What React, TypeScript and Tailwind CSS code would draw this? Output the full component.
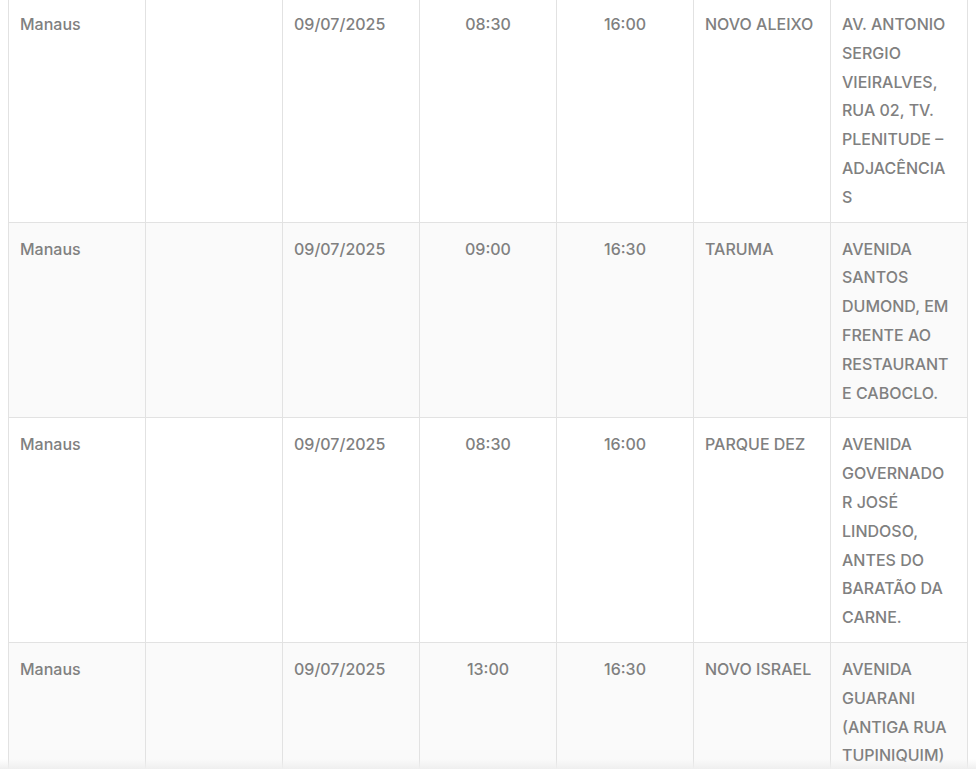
import React from 'react';

type Row = {
  city: string;
  date: string;
  start: string;
  end: string;
  district: string;
  address: string[];
};

const rows: Row[] = [
  {
    city: 'Manaus',
    date: '09/07/2025',
    start: '08:30',
    end: '16:00',
    district: 'NOVO ALEIXO',
    address: ['AV. ANTONIO', 'SERGIO', 'VIEIRALVES,', 'RUA 02, TV.', 'PLENITUDE –', 'ADJACÊNCIA', 'S']
  },
  {
    city: 'Manaus',
    date: '09/07/2025',
    start: '09:00',
    end: '16:30',
    district: 'TARUMA',
    address: ['AVENIDA', 'SANTOS', 'DUMOND, EM', 'FRENTE AO', 'RESTAURANT', 'E CABOCLO.']
  },
  {
    city: 'Manaus',
    date: '09/07/2025',
    start: '08:30',
    end: '16:00',
    district: 'PARQUE DEZ',
    address: ['AVENIDA', 'GOVERNADO', 'R JOSÉ', 'LINDOSO,', 'ANTES DO', 'BARATÃO DA', 'CARNE.']
  },
  {
    city: 'Manaus',
    date: '09/07/2025',
    start: '13:00',
    end: '16:30',
    district: 'NOVO ISRAEL',
    address: ['AVENIDA', 'GUARANI', '(ANTIGA RUA', 'TUPINIQUIM)']
  }
];

const cell = 'border border-[#e2e2e2] px-[11px] pt-[12px] pb-[10px] align-top';

export default function App() {
  return (
    <div className="relative h-[769px] overflow-hidden bg-white">
      <div className="pl-2 -mt-[3px]">
        <table
          className="w-[960px] table-fixed border-collapse text-[16px] leading-[28.8px] font-medium text-[#808080]"
          style={{ fontFamily: 'Inter, "Noto Sans", sans-serif' }}
        >
          <tbody>
            {rows.map((r, i) => (
              <tr key={i} className={i % 2 === 1 ? 'bg-[#fafafa]' : 'bg-white'}>
                <td className={cell}>{r.city}</td>
                <td className={cell}></td>
                <td className={cell}>{r.date}</td>
                <td className={cell + ' text-center'}>{r.start}</td>
                <td className={cell + ' text-center'}>{r.end}</td>
                <td className={cell + ' whitespace-nowrap'}>{r.district}</td>
                <td className={cell}>
                  {r.address.map((line, j) => (
                    <span key={j} className="block whitespace-nowrap">
                      {line}
                    </span>
                  ))}
                </td>
              </tr>
            ))}
          </tbody>
        </table>
      </div>
      <div className="pointer-events-none absolute bottom-0 left-0 right-0 h-[10px] bg-gradient-to-b from-transparent to-[#efefef]" />
    </div>
  );
}
